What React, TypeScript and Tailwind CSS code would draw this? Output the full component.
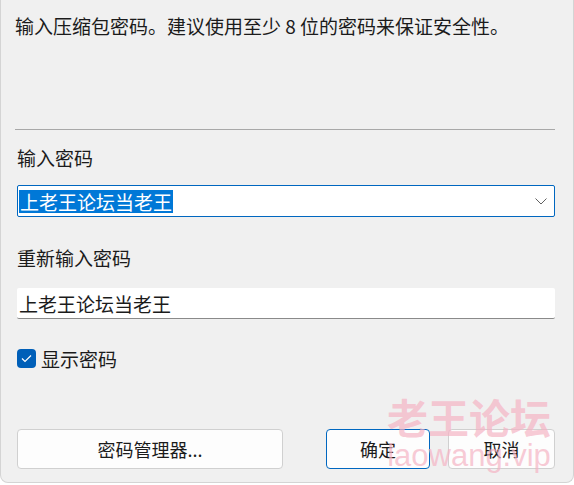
export default function App() {
  const font = { fontFamily: '"Noto Sans CJK SC", "Noto Sans", sans-serif' };
  return (
    <div className="w-[574px] h-[485px] bg-white text-[#1b1b1b]" style={font}>
      <div className="relative h-[483px] bg-[#f0f0f0] rounded-b-[8px] border-b border-x border-[#d4d4d4] flex flex-col pl-[16px] pr-[18px]">
        {/* Description */}
        <p className="mt-[12px] -ml-[2px] text-[19px] leading-[28px] whitespace-nowrap">
          输入压缩包密码。建议使用至少 8 位的密码来保证安全性。
        </p>

        <div className="mt-[89px] -ml-[2px] h-px bg-[#a8a8a8]" />

        {/* Password */}
        <label className="mt-[14px] text-[19px] leading-[27px]">输入密码</label>
        <div className="mt-[14px] h-[32px] bg-white border border-[#0067c0] rounded-[2px] flex items-center pl-[1px] pr-[7px]">
          <span className="bg-[#0078d7] text-white text-[19px] leading-[23px] px-[1px]">上老王论坛当老王</span>
          <div className="flex-1" />
          <svg width="12" height="7" viewBox="0 0 12 7" className="mt-[1px]">
            <polyline points="0.5,0.5 6,6 11.5,0.5" fill="none" stroke="#606060" strokeWidth="1" />
          </svg>
        </div>

        {/* Confirm password */}
        <label className="mt-[27px] text-[19px] leading-[27px]">重新输入密码</label>
        <div className="mt-[17px] h-[31px] bg-white border-b border-[#8a8a8a] rounded-[2px] flex items-center pl-[2px]">
          <span className="text-[19px] leading-[23px]">上老王论坛当老王</span>
        </div>

        {/* Show password */}
        <div className="mt-[29px] h-[20px] flex items-center gap-[5px]">
          <div className="w-[19px] h-[19px] rounded-[4px] bg-[#005fb8] flex items-center justify-center">
            <svg width="11" height="9" viewBox="0 0 11 9">
              <polyline points="1,4.5 4,7.5 10,1.5" fill="none" stroke="white" strokeWidth="1.2" />
            </svg>
          </div>
          <span className="text-[19px] leading-[27px]">显示密码</span>
        </div>

        {/* Buttons */}
        <div className="mt-[61px] flex items-center">
          <button className="w-[266px] h-[40px] bg-[#fdfdfd] border border-[#d0d0d0] rounded-[4px] text-[18px]">
            密码管理器...
          </button>
          <div className="flex-1" />
          <button className="w-[104px] h-[40px] bg-[#fdfdfd] border border-[#0067c0] rounded-[4px] text-[18px]">
            确定
          </button>
          <button className="ml-[18px] w-[107px] h-[40px] bg-[#fdfdfd] border border-[#d0d0d0] rounded-[4px] text-[18px]">
            取消
          </button>
        </div>

        {/* Watermark */}
        <div className="absolute left-[386px] top-[396px] pointer-events-none text-[#f5b3c4]/70 flex flex-col items-center leading-none">
          <span className="text-[41px] font-bold">老王论坛</span>
          <span className="mt-[3px] text-[31px]" style={{ fontFamily: '"Liberation Sans", sans-serif' }}>laowang.vip</span>
        </div>
      </div>
    </div>
  );
}
